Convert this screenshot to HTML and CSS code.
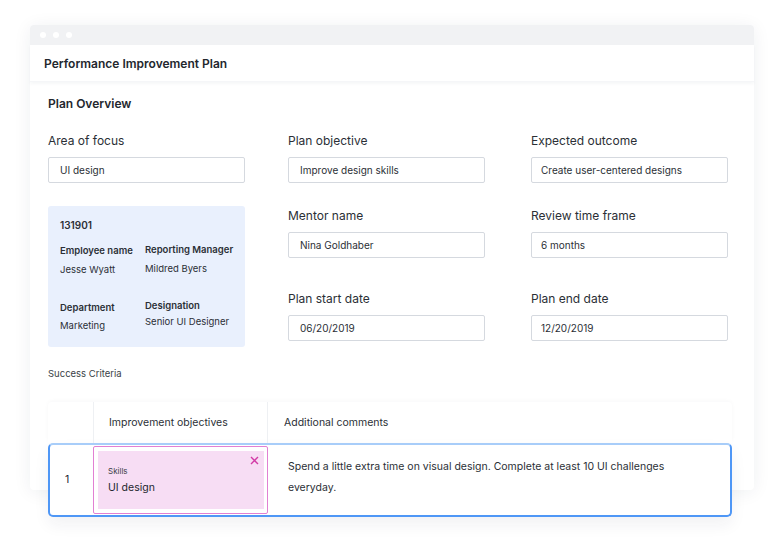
FILE: index.html
```html
<!DOCTYPE html>
<html>
<head>
<meta charset="utf-8">
<link rel="stylesheet" href="styles.css">
</head>
<body>
<div class="window">
  <div class="titlebar"><span class="dot"></span><span class="dot"></span><span class="dot"></span></div>
  <div class="header">Performance Improvement Plan</div>
  <div class="content">
    <h2 class="section-title">Plan Overview</h2>
    <div class="grid">
      <div class="col">
        <div class="field">
          <div class="label">Area of focus</div>
          <div class="input">UI design</div>
        </div>
        <div class="card">
          <div class="card-id">131901</div>
          <div class="card-grid">
            <div class="card-item"><div class="ck">Employee name</div><div class="cv">Jesse Wyatt</div></div>
            <div class="card-item"><div class="ck">Reporting Manager</div><div class="cv">Mildred Byers</div></div>
            <div class="card-item low"><div class="ck">Department</div><div class="cv">Marketing</div></div>
            <div class="card-item low2"><div class="ck">Designation</div><div class="cv">Senior UI Designer</div></div>
          </div>
        </div>
      </div>
      <div class="col">
        <div class="field">
          <div class="label">Plan objective</div>
          <div class="input">Improve design skills</div>
        </div>
        <div class="field f2">
          <div class="label">Mentor name</div>
          <div class="input">Nina Goldhaber</div>
        </div>
        <div class="field f3">
          <div class="label">Plan start date</div>
          <div class="input">06/20/2019</div>
        </div>
      </div>
      <div class="col col3">
        <div class="field">
          <div class="label">Expected outcome</div>
          <div class="input">Create user-centered designs</div>
        </div>
        <div class="field f2">
          <div class="label">Review time frame</div>
          <div class="input">6 months</div>
        </div>
        <div class="field f3">
          <div class="label">Plan end date</div>
          <div class="input">12/20/2019</div>
        </div>
      </div>
    </div>
    <div class="success">Success Criteria</div>
    <div class="table">
      <div class="thead">
        <div class="th num"></div>
        <div class="th obj">Improvement objectives</div>
        <div class="th com">Additional comments</div>
      </div>
      <div class="trow">
        <div class="td num">1</div>
        <div class="td obj">
          <div class="tag">
            <div class="tag-k">Skills</div>
            <div class="tag-v">UI design</div>
            <svg class="close" width="9" height="9" viewBox="0 0 9 9"><path d="M1 1L8 8M8 1L1 8" stroke="#d23aa6" stroke-width="1.4" fill="none"/></svg>
          </div>
        </div>
        <div class="td com">Spend a little extra time on visual design. Complete at least 10 UI challenges everyday.</div>
      </div>
    </div>
  </div>
</div>
</body>
</html>
```

FILE: styles.css
```css
* { box-sizing: border-box; }
html, body { min-height: 551px; }
body {
  margin: 0;
  padding-top: 25px;
  background: #ffffff;
  font-family: Inter, "Noto Sans", sans-serif;
  color: #2b2f36;
}
.window {
  margin-left: 30px;
  width: 724px;
  height: 465px;
  background: #ffffff;
  border-radius: 4px;
  box-shadow: 0 2px 18px rgba(30, 40, 70, 0.07);
}
.titlebar {
  height: 20px;
  background: #f1f2f4;
  border-radius: 4px 4px 0 0;
  display: flex;
  align-items: center;
  gap: 7px;
  padding-left: 10px;
}
.dot {
  width: 6px;
  height: 6px;
  border-radius: 50%;
  background: #ffffff;
}
.header {
  height: 37px;
  padding-left: 14px;
  display: flex;
  align-items: center;
  font-size: 12px;
  font-weight: 600;
  color: #23272e;
  box-shadow: 0 2px 3px rgba(30, 40, 70, 0.04);
  border-bottom: 1px solid #f5f6f8;
}
.content {
  padding: 14px 0 0 18px;
}
.section-title {
  margin: 0;
  font-size: 12px;
  font-weight: 600;
  line-height: 16px;
  color: #23272e;
}
.grid {
  display: grid;
  grid-template-columns: 240px 243px 197px;
  margin-top: 21px;
}
.col {
  display: flex;
  flex-direction: column;
}
.field { width: 197px; }
.f2 { margin-top: 25px; }
.f3 { margin-top: 33px; }
.label {
  font-size: 12px;
  line-height: 16px;
  color: #2b2f36;
  margin-bottom: 8px;
}
.input {
  height: 26px;
  border: 1px solid #d5d9df;
  border-radius: 2px;
  padding-left: 11px;
  display: flex;
  align-items: center;
  font-size: 10px;
  color: #2b2f36;
  background: #fff;
}
.col3 .input { padding-left: 9px; }
.card {
  margin-top: 23px;
  width: 197px;
  height: 141px;
  background: #e9f0fd;
  border-radius: 3px;
  padding: 12px 0 0 12px;
}
.card-id {
  font-size: 10px;
  font-weight: 600;
  line-height: 14px;
}
.card-grid {
  display: grid;
  grid-template-columns: 85px 100px;
  margin-top: 12px;
}
.card-item { height: 55px; }
.card-item.low { padding-top: 2px; }
.ck {
  font-size: 9.5px;
  font-weight: 600;
  line-height: 14px;
  white-space: nowrap;
}
.card-item:nth-child(2) .ck { margin-top: -1px; }
.card-item.low2 .ck { margin-top: 0; }
.cv {
  font-size: 9.5px;
  line-height: 14px;
  margin-top: 5px;
  white-space: nowrap;
}
.card-item.low .cv { margin-top: 4px; }
.card-item.low2 .cv { margin-top: 2px; }
.success {
  margin-top: 20px;
  font-size: 9.5px;
  line-height: 14px;
  color: #3a3f47;
}
.table {
  margin-top: 21px;
  width: 684px;
  position: relative;
  z-index: 1;
}
.thead {
  display: flex;
  height: 41px;
  background: #fff;
  border-radius: 4px 4px 0 0;
  box-shadow: 0 -1px 4px rgba(30, 40, 70, 0.03);
}
.th {
  font-size: 10.5px;
  color: #2b2f36;
  display: flex;
  align-items: center;
}
.num { width: 45px; flex: none; }
.obj { width: 175px; flex: none; }
.th.obj {
  border-left: 1px solid #eef0f3;
  border-right: 1px solid #eef0f3;
  padding-left: 15px;
}
.th.com { padding-left: 16px; }
.trow {
  display: flex;
  height: 74px;
  border: 2px solid #4f97f6;
  border-top-color: #a8cdf9;
  border-radius: 5px;
  background: #fff;
  box-shadow: 0 8px 16px rgba(30, 40, 70, 0.06);
}
.td.num {
  width: 43px;
  font-size: 10.5px;
  color: #23272e;
  display: flex;
  align-items: center;
  padding-left: 15px;
  padding-bottom: 2px;
}
.td.obj {
  padding: 1px 0;
}
.tag {
  position: relative;
  height: 68px;
  border: 1px solid #e27fd3;
  border-radius: 2px;
  padding: 4px 3px 4px 4px;
}
.tag::before {
  content: "";
  position: absolute;
  inset: 4px 3px 4px 4px;
  background: #f7ddf4;
}
.tag-k, .tag-v {
  position: relative;
  padding-left: 10px;
}
.tag-k {
  font-size: 8px;
  line-height: 12px;
  margin-top: 14px;
  color: #3a3f47;
}
.tag-v {
  font-size: 10.5px;
  line-height: 14px;
  margin-top: 4px;
  color: #23272e;
}
.close {
  position: absolute;
  top: 9px;
  right: 8px;
}
.td.com {
  flex: 1;
  font-size: 10.5px;
  line-height: 21px;
  padding: 11px 40px 0 20px;
  color: #2b2f36;
}
```
